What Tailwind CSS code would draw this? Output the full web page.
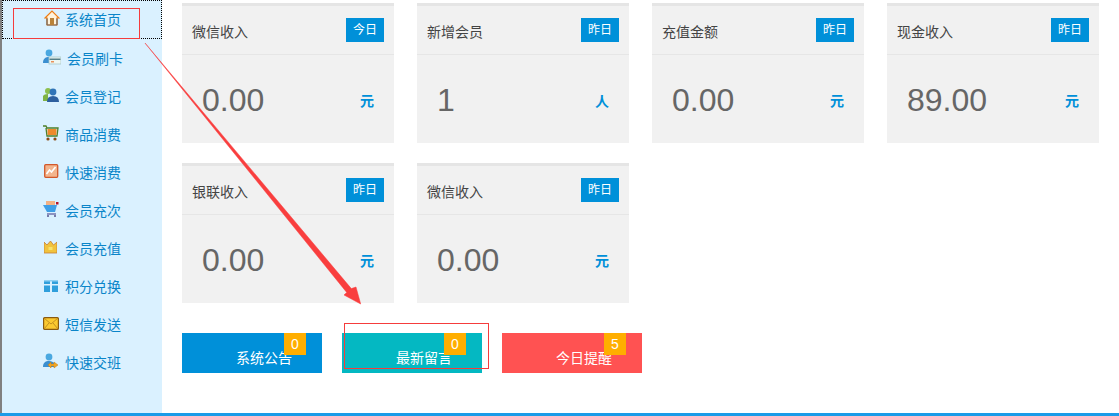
<!DOCTYPE html>
<html lang="en">
<head>
    <meta charset="UTF-8">
    <title>系统首页</title>
    <script src="https://cdn.jsdelivr.net/npm/@tailwindcss/browser@4"></script>
</head>
<body class="bg-white font-['Liberation_Sans','Noto_Sans_CJK_SC',sans-serif]">
    <div class="relative w-[1119px] h-[416px] overflow-hidden flex border-b-[3px] border-[#1a9be8]">
        <!-- sidebar -->
        <aside class="w-[162px] h-full bg-[#daf1ff] border-l-2 border-[#808080] shrink-0">
            <ul class="text-sm text-[#0a85c9]">
                <li class="h-[39px] mb-px pt-px flex items-center pl-[41px] gap-[5px] border border-dotted border-black">
                    <svg class="w-4 h-4 -mt-1" viewBox="0 0 16 16"><path d="M1 8 8 1l7 7-2 0v7H3V8z" fill="#fff3dc" stroke="#ef7d12" stroke-width="1.2"/><path d="M3 15V8.500M13 15V8.500M3 15h10" fill="none" stroke="#6b6b6b" stroke-width="1.2"/><rect x="6" y="8" width="4" height="7" fill="#b98238"/></svg>
                    <span>系统首页</span>
                </li>
                <li class="h-[38px] flex items-center pl-[41px] gap-[6px]">
                    <svg class="w-[18px] h-4 -mt-1" viewBox="0 0 18 16"><circle cx="6" cy="4" r="3.4" fill="#4aa8e0"/><path d="M0 14c0-5 3-6 6-6s4 1 5 2v4z" fill="#3b8fd0"/><rect x="6" y="8" width="12" height="7" fill="#eef7f3" stroke="#a9c9c9" stroke-width=".8"/><rect x="6.5" y="9.5" width="11" height="1.5" fill="#557f86"/><rect x="8" y="12" width="3" height="1.500" fill="#e9925a"/></svg>
                    <span>会员刷卡</span>
                </li>
                <li class="h-[38px] flex items-center pl-[41px] gap-[6px]">
                    <svg class="w-4 h-4 -mt-1" viewBox="0 0 16 16"><circle cx="5" cy="4" r="3" fill="#8cbf4e"/><path d="M0 14V9q1-2 5-2v7z" fill="#7fb344"/><circle cx="10" cy="5" r="3.4" fill="#2f74b8"/><path d="M4 15q0-6 6-6t6 6z" fill="#2c5f9f"/></svg>
                    <span>会员登记</span>
                </li>
                <li class="h-[38px] flex items-center pl-[41px] gap-[6px]">
                    <svg class="w-4 h-4 -mt-1" viewBox="0 0 16 16"><path d="M0 1h3l1 2h11l-1 8H4L3 3" fill="none" stroke="#4d7f2a" stroke-width="1.3"/><rect x="4.5" y="4" width="9" height="6" fill="#ee8a2b"/><circle cx="5" cy="14" r="1.6" fill="#8a4b12"/><circle cx="12" cy="14" r="1.6" fill="#8a4b12"/></svg>
                    <span>商品消费</span>
                </li>
                <li class="h-[38px] flex items-center pl-[42px] gap-[5px]">
                    <svg class="w-4 h-4 -mt-1" viewBox="0 0 16 16"><rect x=".7" y="1.7" width="13" height="12.6" rx="1" fill="#f3b58e" stroke="#d2582a" stroke-width="1.3"/><path d="m2.500 11 3-4 2 2 4-5" fill="none" stroke="#fff" stroke-width="1.6"/></svg>
                    <span>快速消费</span>
                </li>
                <li class="h-[38px] flex items-center pl-[41px] gap-[6px]">
                    <svg class="w-4 h-4 -mt-1" viewBox="0 0 16 16"><rect x="3" y="0" width="9" height="4" fill="#f3b184"/><path d="M0 4h14l-2 7H4z" fill="#3f9fe6"/><rect x="13" y="1" width="2.500" height="2.500" fill="#b3122b"/><path d="M4 13h9" stroke="#6a6aa6" stroke-width="1.400"/><circle cx="5" cy="15" r="1" fill="#55558f"/><circle cx="12" cy="15" r="1" fill="#55558f"/></svg>
                    <span>会员充次</span>
                </li>
                <li class="h-[38px] flex items-center pl-[42px] gap-[5px]">
                    <svg class="w-[13px] h-[13px] mr-[3px] -mt-1" viewBox="0 0 13 13"><path d="M0 1l3 3 3.500-4 3 4 3.500-3v11H0z" fill="#f1c33d" stroke="#c67e35" stroke-width=".8"/><rect x="4.500" y="6" width="4" height="3" fill="#f7e26b"/></svg>
                    <span>会员充值</span>
                </li>
                <li class="h-[38px] flex items-center pl-[42px] gap-[5px]">
                    <svg class="w-[14px] h-[14px] mr-[2px] -mt-1" viewBox="0 0 14 14"><rect x="0" y="2" width="14" height="12" fill="#2f9fdc"/><rect x="6" y="0" width="2" height="14" fill="#daf1ff"/><rect x="0" y="6" width="14" height="1.500" fill="#daf1ff"/><rect x="0" y="2" width="14" height="1.500" fill="#8fd0f2"/></svg>
                    <span>积分兑换</span>
                </li>
                <li class="h-[38px] flex items-center pl-[41px] gap-[6px]">
                    <svg class="w-4 h-[13px] -mt-1" viewBox="0 0 16 13"><rect x=".6" y=".6" width="14.800" height="11.800" rx="1" fill="#fbc92f" stroke="#8a5a10" stroke-width="1.200"/><path d="m1 1 7 6 7-6M1 12l5-6M15 12l-5-6" fill="none" stroke="#b5811a" stroke-width=".8"/></svg>
                    <span>短信发送</span>
                </li>
                <li class="h-[38px] flex items-center pl-[41px] gap-[6px]">
                    <svg class="w-4 h-4 -mt-1" viewBox="0 0 16 16"><circle cx="6" cy="4" r="3.400" fill="#4aa8e0"/><path d="M0 14c0-5 3-6 6-6s4 1 5 2v4z" fill="#3b8fd0"/><path d="m5 12 3-3v2h3V9l4 3-4 3v-2H8v2z" fill="#f2a723" stroke="#c97a10" stroke-width=".5"/></svg>
                    <span>快速交班</span>
                </li>
            </ul>
        </aside>

        <!-- main -->
        <main class="pl-5 pt-[3px] flex-1">
            <div class="grid grid-cols-[repeat(4,212px)] gap-x-[23px] gap-y-5">
                <div class="h-[140px] bg-[#f1f1f1] border-t-[3px] border-[#e5e5e5]">
                    <div class="h-[49px] px-2.5 flex items-center justify-between border-b border-[#e6e6e6] text-sm text-[#444]">
                        <span class="mt-[3px]">微信收入</span>
                        <span class="w-[38px] h-6 bg-[#0090d9] text-white text-xs flex items-center justify-center">今日</span>
                    </div>
                    <div class="h-[88px] flex items-center justify-between px-5">
                        <span class="text-[32px] text-[#666] mt-[2px]">0.00</span>
                        <span class="text-sm font-bold text-[#0090d9] mt-[3px]">元</span>
                    </div>
                </div>
                <div class="h-[140px] bg-[#f1f1f1] border-t-[3px] border-[#e5e5e5]">
                    <div class="h-[49px] px-2.5 flex items-center justify-between border-b border-[#e6e6e6] text-sm text-[#444]">
                        <span class="mt-[3px]">新增会员</span>
                        <span class="w-[38px] h-6 bg-[#0090d9] text-white text-xs flex items-center justify-center">昨日</span>
                    </div>
                    <div class="h-[88px] flex items-center justify-between px-5">
                        <span class="text-[32px] text-[#666] mt-[2px]">1</span>
                        <span class="text-sm font-bold text-[#0090d9] mt-[3px]">人</span>
                    </div>
                </div>
                <div class="h-[140px] bg-[#f1f1f1] border-t-[3px] border-[#e5e5e5]">
                    <div class="h-[49px] px-2.5 flex items-center justify-between border-b border-[#e6e6e6] text-sm text-[#444]">
                        <span class="mt-[3px]">充值金额</span>
                        <span class="w-[38px] h-6 bg-[#0090d9] text-white text-xs flex items-center justify-center">昨日</span>
                    </div>
                    <div class="h-[88px] flex items-center justify-between px-5">
                        <span class="text-[32px] text-[#666] mt-[2px]">0.00</span>
                        <span class="text-sm font-bold text-[#0090d9] mt-[3px]">元</span>
                    </div>
                </div>
                <div class="h-[140px] bg-[#f1f1f1] border-t-[3px] border-[#e5e5e5]">
                    <div class="h-[49px] px-2.5 flex items-center justify-between border-b border-[#e6e6e6] text-sm text-[#444]">
                        <span class="mt-[3px]">现金收入</span>
                        <span class="w-[38px] h-6 bg-[#0090d9] text-white text-xs flex items-center justify-center">昨日</span>
                    </div>
                    <div class="h-[88px] flex items-center justify-between px-5">
                        <span class="text-[32px] text-[#666] mt-[2px]">89.00</span>
                        <span class="text-sm font-bold text-[#0090d9] mt-[3px]">元</span>
                    </div>
                </div>
                <div class="h-[140px] bg-[#f1f1f1] border-t-[3px] border-[#e5e5e5]">
                    <div class="h-[49px] px-2.5 flex items-center justify-between border-b border-[#e6e6e6] text-sm text-[#444]">
                        <span class="mt-[3px]">银联收入</span>
                        <span class="w-[38px] h-6 bg-[#0090d9] text-white text-xs flex items-center justify-center">昨日</span>
                    </div>
                    <div class="h-[88px] flex items-center justify-between px-5">
                        <span class="text-[32px] text-[#666] mt-[2px]">0.00</span>
                        <span class="text-sm font-bold text-[#0090d9] mt-[3px]">元</span>
                    </div>
                </div>
                <div class="h-[140px] bg-[#f1f1f1] border-t-[3px] border-[#e5e5e5]">
                    <div class="h-[49px] px-2.5 flex items-center justify-between border-b border-[#e6e6e6] text-sm text-[#444]">
                        <span class="mt-[3px]">微信收入</span>
                        <span class="w-[38px] h-6 bg-[#0090d9] text-white text-xs flex items-center justify-center">昨日</span>
                    </div>
                    <div class="h-[88px] flex items-center justify-between px-5">
                        <span class="text-[32px] text-[#666] mt-[2px]">0.00</span>
                        <span class="text-sm font-bold text-[#0090d9] mt-[3px]">元</span>
                    </div>
                </div>
            </div>

            <div class="flex gap-5 mt-[30px] text-sm text-white">
                <div class="relative w-[140px] h-10 bg-[#0090d9] pl-[54px] pt-[15px] leading-5">系统公告
                    <span class="absolute right-4 top-0 w-[22px] h-[22px] bg-[#ffae00] flex items-center justify-center">0</span>
                </div>
                <div class="relative w-[140px] h-10 bg-[#04b8c2] pl-[54px] pt-[15px] leading-5">最新留言
                    <span class="absolute right-4 top-0 w-[22px] h-[22px] bg-[#ffae00] flex items-center justify-center">0</span>
                </div>
                <div class="relative w-[140px] h-10 bg-[#ff5252] pl-[54px] pt-[15px] leading-5">今日提醒
                    <span class="absolute right-4 top-0 w-[22px] h-[22px] bg-[#ffae00] flex items-center justify-center">5</span>
                </div>
            </div>
        </main>

        <!-- red annotations drawn over the page -->
        <svg class="absolute left-0 top-0 pointer-events-none" width="1119" height="416" viewBox="0 0 1119 416">
            <rect x="13.500" y="8.500" width="126" height="30" fill="none" stroke="#f53c3c" stroke-width="1"/>
            <rect x="344.500" y="323.500" width="144" height="45" fill="none" stroke="#f53c3c" stroke-width="1"/>
            <path d="M145 43 L351.300 288.600 L356 287 L360.700 304 L344 295 L346.700 292.400 Z" fill="#f93e3e" stroke="#f93e3e" stroke-width=".5" stroke-linejoin="round"/>
        </svg>
    </div>
</body>
</html>
